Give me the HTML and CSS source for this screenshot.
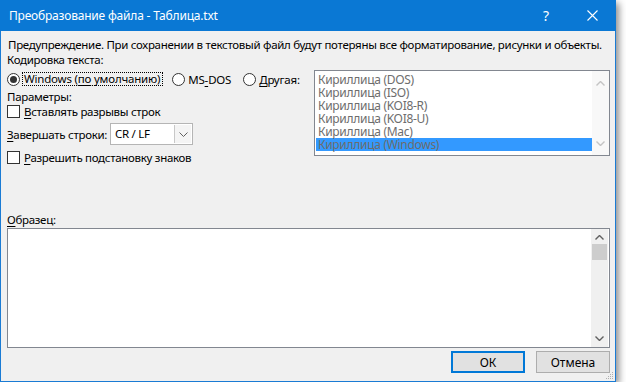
FILE: index.html
```html
<!DOCTYPE html>
<html lang="ru">

<head>
  <meta charset="UTF-8">
  <title>Преобразование файла</title>
  <link rel="stylesheet" href="styles.css">
</head>

<body>

  <div class="window">
    <div class="titlebar">
      <span class="title">Преобразование файла - Таблица.txt</span>
      <span class="help">?</span>
      <svg class="close" width="11" height="11" viewBox="0 0 11 11">
        <path d="M0.5 0.5 L10.5 10.5 M10.5 0.5 L0.5 10.5" stroke="#fff" stroke-width="1.1" fill="none"/>
      </svg>
    </div>

    <div class="content">
      <p class="line">Предупреждение. При сохранении в текстовый файл будут потеряны все форматирование, рисунки и объекты.</p>
      <p class="line">Кодировка текста:</p>

      <div class="encoding">
        <div class="options">
          <div class="radios">
            <label class="radio"><span class="circle checked"></span><span class="focus">Windows (<u>по</u> умолчанию)</span></label>
            <label class="radio"><span class="circle"></span><span>MS<u>-</u>DOS</span></label>
            <label class="radio other"><span class="circle"></span><span><u>Д</u>ругая:</span></label>
          </div>
          <p class="line params">Параметры:</p>
          <label class="check"><span class="box"></span><span><u>В</u>ставлять разрывы строк</span></label>
          <div class="endings">
            <span><u>З</u>авершать строки:</span>
            <div class="select">
              <span class="value">CR / LF</span>
              <span class="drop">
                <svg width="9" height="5" viewBox="0 0 9 5"><path d="M0.5 0.5 L4.5 4.5 L8.5 0.5" stroke="#606060" fill="none"/></svg>
              </span>
            </div>
          </div>
          <label class="check"><span class="box"></span><span><u>Р</u>азрешить подстановку знаков</span></label>
        </div>

        <div class="listbox">
          <ul class="items">
            <li>Кириллица (DOS)</li>
            <li>Кириллица (ISO)</li>
            <li>Кириллица (KOI8-R)</li>
            <li>Кириллица (KOI8-U)</li>
            <li>Кириллица (Mac)</li>
            <li class="selected">Кириллица (Windows)</li>
          </ul>
          <div class="scrollbar disabled">
            <svg width="9" height="5" viewBox="0 0 9 5"><path d="M0.5 4.5 L4.5 0.5 L8.5 4.5" stroke="#c4c4c4" stroke-width="1.4" fill="none"/></svg>
            <svg width="9" height="5" viewBox="0 0 9 5"><path d="M0.5 0.5 L4.5 4.5 L8.5 0.5" stroke="#c4c4c4" stroke-width="1.4" fill="none"/></svg>
          </div>
        </div>
      </div>

      <p class="line sample-label"><u>О</u>бразец:</p>
      <div class="sample">
        <div class="scrollbar">
          <svg width="9" height="5" viewBox="0 0 9 5"><path d="M0.5 4.5 L4.5 0.5 L8.5 4.5" stroke="#606060" stroke-width="1.4" fill="none"/></svg>
          <div class="thumb"></div>
          <div class="track"></div>
          <svg width="9" height="5" viewBox="0 0 9 5"><path d="M0.5 0.5 L4.5 4.5 L8.5 0.5" stroke="#606060" stroke-width="1.4" fill="none"/></svg>
        </div>
      </div>

      <div class="buttons">
        <button class="btn default">ОК</button>
        <button class="btn">Отмена</button>
      </div>
    </div>

    <svg class="grip" width="8" height="8" viewBox="0 0 8 8">
      <rect x="6" y="0" width="1" height="1" fill="#b0b0b0"/>
      <rect x="4" y="2" width="1" height="1" fill="#b0b0b0"/>
      <rect x="6" y="2" width="1" height="1" fill="#b0b0b0"/>
      <rect x="2" y="4" width="1" height="1" fill="#b0b0b0"/>
      <rect x="4" y="4" width="1" height="1" fill="#b0b0b0"/>
      <rect x="6" y="4" width="1" height="1" fill="#b0b0b0"/>
      <rect x="0" y="6" width="1" height="1" fill="#b0b0b0"/>
      <rect x="2" y="6" width="1" height="1" fill="#b0b0b0"/>
      <rect x="4" y="6" width="1" height="1" fill="#b0b0b0"/>
      <rect x="6" y="6" width="1" height="1" fill="#b0b0b0"/>
    </svg>
  </div>

</body>
</html>
```

FILE: styles.css
```css
body { margin: 0; background: #fff; font-family: "Noto Sans", "Open Sans", sans-serif; font-size: 11.5px; color: #000; }
p { margin: 0; }
u { text-decoration-thickness: 1px; text-underline-offset: 2px; }

.window { position: relative; width: 614px; height: 381px; border: 1px solid #1a7bd4; border-top: none; background: #f0f0f0; box-shadow: 3px 3px 7px rgba(0,0,0,0.45); }

.titlebar { display: flex; align-items: center; height: 31px; margin: 0 -1px; padding: 0 0 0 9px; background: #0a78d4; color: #fff; font-size: 12px; letter-spacing: -0.2px; }
.title { flex: 1; }
.help { width: 46px; font-size: 14px; text-align: center; }
.close { margin: 0 18px; }

.content { padding: 6px 5px 0 6px; }
.line { line-height: 15px; white-space: nowrap; letter-spacing: -0.3px; }
.content > .line:first-child { padding-left: 1px; }

.encoding { display: flex; margin-top: 3px; }
.options { width: 307px; }
.radios { display: flex; align-items: center; height: 16px; margin-top: 1px; gap: 10px; letter-spacing: -0.2px; }
.radio { display: flex; align-items: center; gap: 2px; }
.radio.other { margin-left: 2px; }
.circle { width: 11px; height: 11px; border: 1px solid #333; border-radius: 50%; background: #fff; margin-right: 1px; display: flex; align-items: center; justify-content: center; }
.circle.checked::after { content: ""; width: 7px; height: 7px; border-radius: 50%; background: #333; }
.focus { outline: 1px dotted #000; padding: 0 2px 0 1px; line-height: 12px; }
.params { margin-top: 2px; }

.check { display: flex; align-items: center; gap: 4px; height: 14px; letter-spacing: -0.3px; }
.box { width: 11px; height: 11px; border: 1px solid #333; background: #fff; }

.endings { display: flex; align-items: center; gap: 3px; margin: 5px 0; letter-spacing: -0.3px; }
.select { display: flex; width: 81px; height: 20px; border: 1px solid #b5b5b5; background: #fff; }
.value { flex: 1; padding-left: 4px; line-height: 20px; }
.drop { display: flex; align-items: center; justify-content: center; width: 16px; margin: 1px; border-left: 1px solid #c8c8c8; background: #f4f4f4; }

.listbox { display: flex; width: 294px; height: 84px; border: 1px solid #828790; background: #fff; }
.items { flex: 1; list-style: none; margin: 0; padding: 2px 0 0 1px; color: #6d6d6d; font-size: 12px; letter-spacing: -0.3px; }
.items li { line-height: 13px; padding-left: 2px; }
.items li.selected { background: #3399ff; }

.scrollbar { display: flex; flex-direction: column; align-items: center; width: 17px; background: #f0f0f0; }
.scrollbar svg { margin: 6px 0; }
.disabled { justify-content: space-between; padding: 4px 0 3px; background: #f8f8f8; }

.sample-label { margin-top: 48px; }
.sample { display: flex; justify-content: flex-end; width: 601px; height: 118px; margin-top: 1px; border: 1px solid #828790; background: #fff; }
.sample .scrollbar { margin-right: 1px; }
.thumb { width: 15px; height: 16px; background: #cdcdcd; margin-top: -2px; }
.track { flex: 1; }

.buttons { display: flex; justify-content: flex-end; gap: 11px; margin-top: 3px; }
.btn { width: 74px; height: 22px; padding: 0; font-family: inherit; font-size: 12px; border: 1px solid #adadad; background: #e1e1e1; color: #000; }
.btn.default { border: 2px solid #0078d7; }

.grip { position: absolute; right: 1px; bottom: 1px; }
```
